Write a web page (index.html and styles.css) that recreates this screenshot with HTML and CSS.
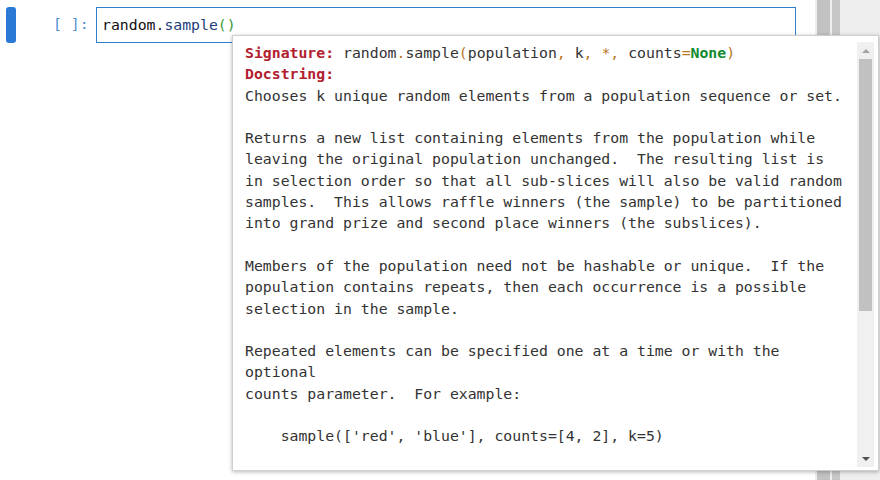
FILE: index.html
```
<!DOCTYPE html>
<html>
<head>
<meta charset="utf-8">
<link rel="stylesheet" href="styles.css">
</head>
<body>
<div class="page">
  <div class="main">
    <div class="cell">
      <div class="collapser"></div>
      <div class="prompt">[ ]:</div>
      <div class="editor"><span class="var">random</span><span class="op">.</span><span class="prop">sample</span><span class="br">()</span></div>
    </div>
  </div>
  <div class="side">
    <div class="side-bar wide"></div>
    <div class="side-bar narrow"></div>
  </div>
</div>

<div class="tooltip">
  <div class="tip-content"><pre class="doc"><span class="hd">Signature:</span> random<span class="o">.</span>sample<span class="o">(</span>population<span class="o">,</span> k<span class="o">,</span> <span class="o">*,</span> counts<span class="o">=</span><span class="kw">None</span><span class="o">)</span>
<span class="hd">Docstring:</span>
Chooses k unique random elements from a population sequence or set.

Returns a new list containing elements from the population while
leaving the original population unchanged.  The resulting list is
in selection order so that all sub-slices will also be valid random
samples.  This allows raffle winners (the sample) to be partitioned
into grand prize and second place winners (the subslices).

Members of the population need not be hashable or unique.  If the
population contains repeats, then each occurrence is a possible
selection in the sample.

Repeated elements can be specified one at a time or with the
optional
counts parameter.  For example:

    sample(['red', 'blue'], counts=[4, 2], k=5)
</pre></div>
  <div class="scrollbar">
    <div class="sb-btn"><span class="arrow up"></span></div>
    <div class="sb-track"><div class="sb-thumb"></div></div>
    <div class="sb-btn"><span class="arrow down"></span></div>
  </div>
</div>
</body>
</html>
```

FILE: styles.css
```
html, body {
  margin: 0;
  padding: 0;
  background: #ffffff;
  width: 880px;
  height: 480px;
  overflow: hidden;
  font-family: "DejaVu Sans Mono", "Liberation Mono", monospace;
}

.page {
  display: flex;
  width: 880px;
  height: 480px;
}

.main {
  flex: 1;
}

.cell {
  display: flex;
  align-items: stretch;
  padding-top: 7px;
}

.collapser {
  flex: none;
  width: 10px;
  height: 36px;
  margin-left: 6px;
  border-radius: 3px;
  background: #2a7ad5;
}

.prompt {
  flex: none;
  width: 80px;
  box-sizing: border-box;
  padding-left: 37px;
  font-size: 14.8px;
  line-height: 34px;
  color: #4d8fcd;
  white-space: pre;
}

.editor {
  flex: none;
  width: 700px;
  height: 36px;
  box-sizing: border-box;
  border: 1px solid #2f7fd0;
  background: #ffffff;
  padding-left: 5px;
  font-size: 14.8px;
  line-height: 33px;
  color: #111;
  white-space: pre;
}

.editor .prop { color: #1d3f7a; }
.editor .op { color: #333; }
.editor .br { color: #3a9a3a; }

.side {
  flex: none;
  width: 65px;
  height: 480px;
  background: #eeeeee;
  display: flex;
  padding-left: 2px;
  gap: 2px;
  box-sizing: border-box;
}

.side-bar {
  height: 100%;
  background: #c2c2c2;
}
.side-bar.wide { width: 13px; }
.side-bar.narrow { width: 8px; background: #c7c7c7; }

.tooltip {
  position: absolute;
  left: 232px;
  top: 35px;
  width: 647px;
  height: 436px;
  box-sizing: border-box;
  border: 1px solid #cfcfcf;
  background: #ffffff;
  box-shadow: 0 1px 4px rgba(0, 0, 0, 0.28);
  padding: 6px 4px 3px 6px;
  display: flex;
}

.tip-content {
  flex: 1;
  overflow: hidden;
  padding-left: 6px;
}

.doc {
  margin: 0;
  font-family: "DejaVu Sans Mono", "Liberation Mono", monospace;
  font-size: 14.8px;
  line-height: 21.3px;
  color: #333333;
  white-space: pre;
}

.doc .hd { color: #b2202e; font-weight: bold; }
.doc .o { color: #b8761d; }
.doc .kw { color: #118a2e; font-weight: bold; }

.scrollbar {
  flex: none;
  width: 17px;
  display: flex;
  flex-direction: column;
  background: #f0f0f0;
}

.sb-btn {
  height: 17px;
  display: flex;
  align-items: center;
  justify-content: center;
}

.sb-track {
  flex: 1;
  padding: 0 2px;
}

.sb-thumb {
  height: 252px;
  background: #c1c1c1;
}

.arrow {
  width: 0;
  height: 0;
  border-left: 4px solid transparent;
  border-right: 4px solid transparent;
}
.arrow.up { border-bottom: 4px solid #a3a3a3; }
.arrow.down { border-top: 4px solid #505050; }
```
